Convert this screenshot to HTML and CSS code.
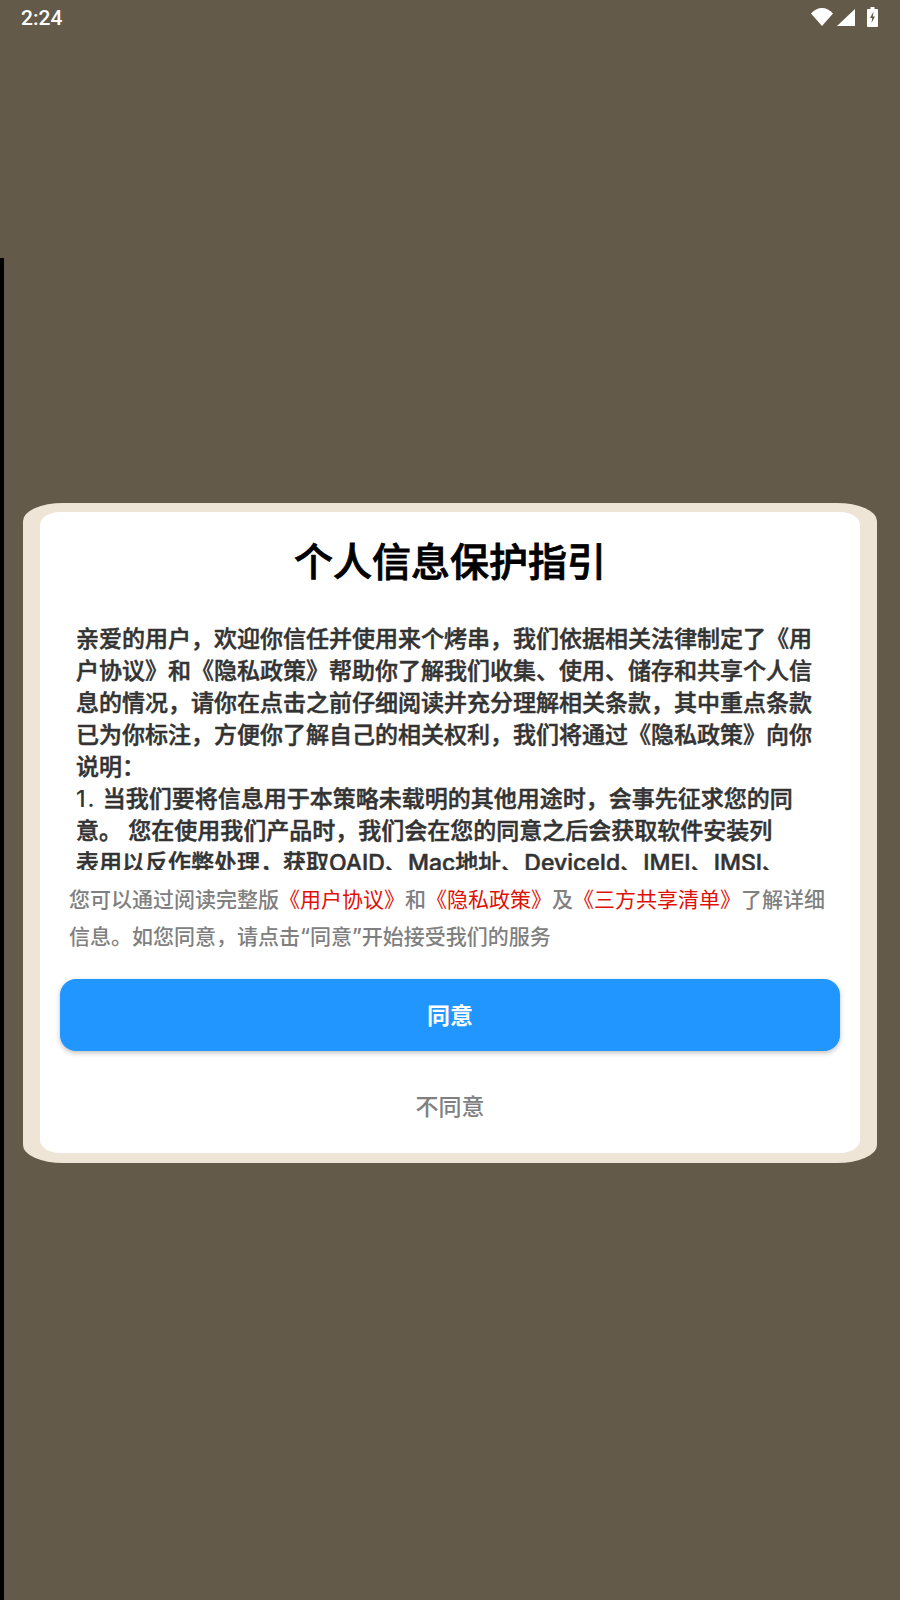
FILE: index.html
```html
<!DOCTYPE html>
<html lang="zh-CN">
<head>
    <meta charset="UTF-8">
    <meta name="viewport" content="width=device-width, initial-scale=1.0">
    <title>个人信息保护指引</title>
    <link rel="stylesheet" href="styles.css">
</head>
<body>
    <div class="edge-strip"></div>
    <header class="status-bar">
        <span class="status-time">2:24</span>
        <div class="status-icons">
            <svg class="icon-wifi" width="22" height="18" viewBox="0 0 22 18"><path d="M0 5.500C3 2 7 0 11 0s8 2 11 5.500L11 18z" fill="#fff"/></svg>
            <svg class="icon-signal" width="18" height="17" viewBox="0 0 18 17"><path d="M18 0v17H0z" fill="#fff"/></svg>
            <svg class="icon-battery" width="11" height="20" viewBox="0 0 11 20"><path fill-rule="evenodd" d="M3.500 0h4v2H10a1 1 0 0 1 1 1v16a1 1 0 0 1-1 1H1a1 1 0 0 1-1-1V3a1 1 0 0 1 1-1h2.500zM6.500 4.500 3 11h2.200l-.7 5L8 9.500H5.800z" fill="#fff"/></svg>
        </div>
    </header>
    <div class="dialog">
        <div class="dialog-inner">
            <h1 class="dialog-title">个人信息保护指引</h1>
            <div class="agreement-text">
                亲爱的用户，欢迎你信任并使用来个烤串，我们依据相关法律制定了《用户协议》和《隐私政策》帮助你了解我们收集、使用、储存和共享个人信息的情况，请你在点击之前仔细阅读并充分理解相关条款，其中重点条款已为你标注，方便你了解自己的相关权利，我们将通过《隐私政策》向你说明：<br>
                <span class="list-num">1.</span> 当我们要将信息用于本策略未载明的其他用途时，会事先征求您的同意。 您在使用我们产品时，我们会在您的同意之后会获取软件安装列<br>
                表用以反作弊处理，获取OAID、Mac地址、DeviceId、IMEI、IMSI、
            </div>
            <p class="notice">您可以通过阅读完整版<a class="notice-link">《用户协议》</a>和<a class="notice-link">《隐私政策》</a>及<a class="notice-link">《三方共享清单》</a>了解详细信息。如您同意，请点击“同意”开始接受我们的服务</p>
            <button class="agree-button">同意</button>
            <button class="disagree-button">不同意</button>
        </div>
    </div>
</body>
</html>
```

FILE: styles.css
```css
body {
    margin: 0;
    background-color: #635a4a;
    font-family: Inter, "Noto Sans CJK SC", sans-serif;
    min-height: 1600px;
    overflow: hidden;
}

.edge-strip {
    position: absolute;
    left: 0;
    top: 258px;
    width: 4px;
    height: 1342px;
    background-color: #000;
}

.status-bar {
    height: 40px;
    padding: 0 22px 0 21px;
    display: flex;
    justify-content: space-between;
    align-items: flex-start;
}

.status-time {
    margin-top: 7px;
    font-family: Roboto, sans-serif;
    font-size: 21px;
    line-height: 23px;
    font-weight: 500;
    color: #fff;
}

.status-icons {
    display: flex;
    align-items: flex-start;
    padding-top: 7px;
}

.icon-wifi {
    margin-top: 1px;
}

.icon-signal {
    margin: 2px 0 0 4px;
}

.icon-battery {
    margin-left: 12px;
}

.dialog {
    margin: 463px 23px 0;
    padding: 9px 17px 10px;
    background-color: #efe5d6;
    border-radius: 40px / 18px;
}

.dialog-inner {
    height: 616px;
    padding: 25px 20px 0;
    background-color: #fff;
    border-radius: 20px / 13px;
}

.dialog-title {
    margin: 0;
    font-size: 39px;
    line-height: 50px;
    font-weight: 500;
    -webkit-text-stroke: 0.8px #000;
    color: #000;
    text-align: center;
}

.agreement-text {
    margin: 36px 16px 0;
    height: 247px;
    overflow: hidden;
    font-size: 23px;
    line-height: 32px;
    font-weight: 500;
    -webkit-text-stroke: 0.5px #333;
    color: #333;
}

.list-num {
    letter-spacing: 2px;
    -webkit-text-stroke: 0;
}

.notice {
    margin: 11px 0 0 9px;
    font-size: 21px;
    line-height: 37px;
    font-weight: 500;
    color: #808080;
}

.notice-link {
    color: #e01005;
    font-weight: 400;
}

.agree-button {
    display: block;
    width: 100%;
    height: 72px;
    margin-top: 24px;
    padding: 0 0 2px;
    border: none;
    border-radius: 16px;
    background-color: #2196ff;
    box-shadow: 0 2px 5px rgba(0, 0, 0, 0.25);
    color: #fff;
    font-family: inherit;
    font-size: 23px;
    font-weight: 700;
}

.disagree-button {
    display: block;
    width: 100%;
    height: 40px;
    margin-top: 34px;
    padding: 0;
    border: none;
    background: none;
    color: #808080;
    font-family: inherit;
    font-size: 23px;
    font-weight: 500;
}
```
